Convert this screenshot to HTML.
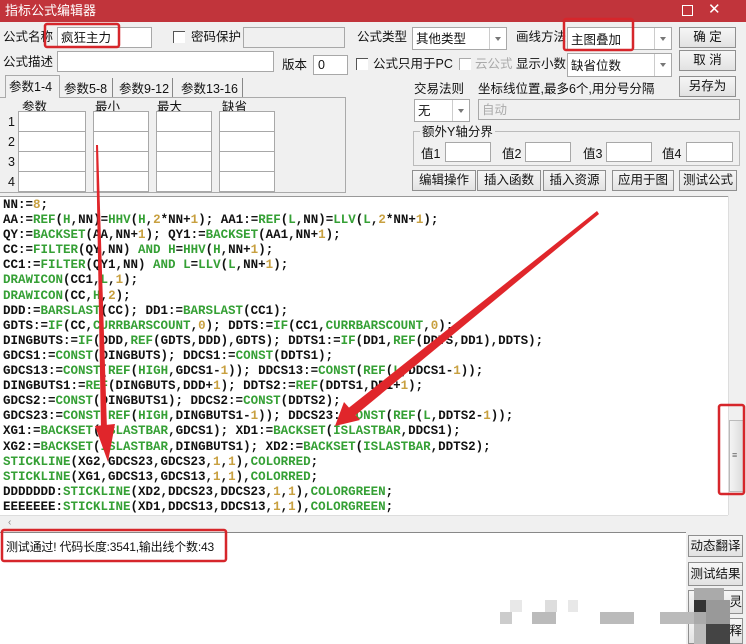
<!DOCTYPE html>
<html><head><meta charset="utf-8">
<style>
*{box-sizing:border-box;margin:0;padding:0}
body{width:746px;height:644px;overflow:hidden;background:#f0f0f0;font-family:"Liberation Sans","Noto Sans CJK SC",sans-serif;font-size:12.5px;color:#111;position:relative}
.a{position:absolute}
.t{position:absolute;white-space:nowrap;line-height:16px}
.in{position:absolute;background:#fff;border:1px solid #a8a8a8}
.dis{background:#f0f0f0}
.btn{position:absolute;background:linear-gradient(#f6f6f6,#e2e2e2);border:1px solid #8f8f8f;text-align:center;font-size:12.5px;line-height:18px;white-space:nowrap}
.cb{position:absolute;width:12px;height:12px;border-left:1px solid #555;border-top:1px solid #555;background:#fff}
.sel{position:absolute;background:#fff;border:1px solid #a8a8a8}
.sel .arr{position:absolute;right:0;top:0;bottom:0;width:17px;border-left:1px solid #ccc;background:#fff}
.sel .arr:after{content:"";position:absolute;left:5px;top:9px;border:3px solid transparent;border-top:4px solid #777}
#code{position:absolute;left:0;top:196px;width:728px;height:319px;background:#fff;border-top:1px solid #999;font-family:"Liberation Mono",monospace;font-weight:bold;font-size:12.5px;line-height:15.1px;padding:1px 0 0 3px;white-space:pre;color:#111}
.g{color:#35a035}.n{color:#c8a040}
</style></head><body>
<div class="a" style="left:0;top:0;width:746px;height:22px;background:#c1343b"></div>
<div class="t" style="left:5px;top:3px;color:#fff;font-size:13px">指标公式编辑器</div>
<div class="a" style="left:682px;top:5px;width:11px;height:11px;border:1px solid #fff"></div>
<div class="t" style="left:708px;top:2px;color:#fff;font-size:15px">✕</div>

<div class="t" style="left:3px;top:29px">公式名称</div>
<div class="in" style="left:57px;top:27px;width:95px;height:21px"></div>
<div class="t" style="left:61px;top:30px">疯狂主力</div>
<div class="cb" style="left:173px;top:31px"></div>
<div class="t" style="left:191px;top:29px">密码保护</div>
<div class="in dis" style="left:243px;top:27px;width:102px;height:21px"></div>
<div class="t" style="left:357px;top:29px">公式类型</div>
<div class="sel" style="left:412px;top:27px;width:95px;height:23px"><div class="arr"></div></div>
<div class="t" style="left:416px;top:31px">其他类型</div>
<div class="t" style="left:516px;top:29px">画线方法</div>
<div class="sel" style="left:567px;top:27px;width:105px;height:23px"><div class="arr"></div></div>
<div class="t" style="left:571px;top:32px">主图叠加</div>
<div class="btn" style="left:679px;top:27px;width:57px;height:21px">确&nbsp;定</div>

<div class="t" style="left:3px;top:54px">公式描述</div>
<div class="in" style="left:57px;top:51px;width:217px;height:21px"></div>
<div class="t" style="left:282px;top:57px">版本</div>
<div class="in" style="left:313px;top:55px;width:35px;height:20px"></div>
<div class="t" style="left:318px;top:57px">0</div>
<div class="cb" style="left:356px;top:58px"></div>
<div class="t" style="left:373px;top:56px">公式只用于PC</div>
<div class="cb" style="left:459px;top:58px;border-color:#aaa"></div>
<div class="t" style="left:475px;top:56px;color:#aaa">云公式</div>
<div class="t" style="left:516px;top:56px">显示小数</div>
<div class="sel" style="left:567px;top:53px;width:105px;height:24px"><div class="arr"></div></div>
<div class="t" style="left:571px;top:58px">缺省位数</div>
<div class="btn" style="left:679px;top:50px;width:57px;height:21px">取&nbsp;消</div>
<div class="btn" style="left:679px;top:76px;width:57px;height:21px">另存为</div>

<div class="a" style="left:0;top:97px;width:346px;height:96px;border:1px solid #aaa;border-left:none;background:#f0f0f0"></div>
<div class="a" style="left:5px;top:75px;width:55px;height:23px;background:#f0f0f0;border:1px solid #aaa;border-bottom:none"></div>
<div class="t" style="left:9px;top:79px">参数1-4</div>
<div class="a" style="left:60px;top:78px;width:53px;height:19px;border-right:1px solid #888"></div>
<div class="t" style="left:64px;top:81px">参数5-8</div>
<div class="a" style="left:113px;top:78px;width:60px;height:19px;border-right:1px solid #888"></div>
<div class="t" style="left:119px;top:81px">参数9-12</div>
<div class="a" style="left:173px;top:78px;width:70px;height:19px;border-right:1px solid #888"></div>
<div class="t" style="left:181px;top:81px">参数13-16</div>
<div class="t" style="left:22px;top:99px">参数</div>
<div class="t" style="left:95px;top:99px">最小</div>
<div class="t" style="left:157px;top:99px">最大</div>
<div class="t" style="left:222px;top:99px">缺省</div>
<div class="t" style="left:8px;top:114px">1</div><div class="t" style="left:8px;top:134px">2</div><div class="t" style="left:8px;top:154px">3</div><div class="t" style="left:8px;top:174px">4</div>
<div class="in" style="left:18px;top:111px;width:68px;height:81px;background:repeating-linear-gradient(#fff 0 19px,#a8a8a8 19px 20px)"></div>
<div class="in" style="left:93px;top:111px;width:56px;height:81px;background:repeating-linear-gradient(#fff 0 19px,#a8a8a8 19px 20px)"></div>
<div class="in" style="left:156px;top:111px;width:56px;height:81px;background:repeating-linear-gradient(#fff 0 19px,#a8a8a8 19px 20px)"></div>
<div class="in" style="left:219px;top:111px;width:56px;height:81px;background:repeating-linear-gradient(#fff 0 19px,#a8a8a8 19px 20px)"></div>

<div class="t" style="left:414px;top:81px">交易法则</div>
<div class="t" style="left:478px;top:81px">坐标线位置,最多6个,用分号分隔</div>
<div class="sel" style="left:414px;top:99px;width:56px;height:23px"><div class="arr"></div></div>
<div class="t" style="left:418px;top:103px">无</div>
<div class="in dis" style="left:478px;top:99px;width:262px;height:21px"></div>
<div class="t" style="left:482px;top:102px;color:#aaa">自动</div>
<div class="a" style="left:413px;top:131px;width:327px;height:35px;border:1px solid #bbb"></div>
<div class="t" style="left:420px;top:124px;background:#f0f0f0;padding:0 2px">额外Y轴分界</div>
<div class="t" style="left:421px;top:146px">值1</div><div class="in" style="left:445px;top:142px;width:46px;height:20px"></div>
<div class="t" style="left:502px;top:146px">值2</div><div class="in" style="left:525px;top:142px;width:46px;height:20px"></div>
<div class="t" style="left:583px;top:146px">值3</div><div class="in" style="left:606px;top:142px;width:46px;height:20px"></div>
<div class="t" style="left:662px;top:146px">值4</div><div class="in" style="left:686px;top:142px;width:47px;height:20px"></div>
<div class="btn" style="left:412px;top:170px;width:64px;height:21px">编辑操作</div>
<div class="btn" style="left:477px;top:170px;width:64px;height:21px">插入函数</div>
<div class="btn" style="left:543px;top:170px;width:63px;height:21px">插入资源</div>
<div class="btn" style="left:612px;top:170px;width:62px;height:21px">应用于图</div>
<div class="btn" style="left:679px;top:170px;width:58px;height:21px">测试公式</div>

<div id="code">NN:=<span class="n">8</span>;
AA:=<span class="g">REF</span>(<span class="g">H</span>,NN)=<span class="g">HHV</span>(<span class="g">H</span>,<span class="n">2</span>*NN+<span class="n">1</span>); AA1:=<span class="g">REF</span>(<span class="g">L</span>,NN)=<span class="g">LLV</span>(<span class="g">L</span>,<span class="n">2</span>*NN+<span class="n">1</span>);
QY:=<span class="g">BACKSET</span>(AA,NN+<span class="n">1</span>); QY1:=<span class="g">BACKSET</span>(AA1,NN+<span class="n">1</span>);
CC:=<span class="g">FILTER</span>(QY,NN) <span class="g">AND</span> <span class="g">H</span>=<span class="g">HHV</span>(<span class="g">H</span>,NN+<span class="n">1</span>);
CC1:=<span class="g">FILTER</span>(QY1,NN) <span class="g">AND</span> <span class="g">L</span>=<span class="g">LLV</span>(<span class="g">L</span>,NN+<span class="n">1</span>);
<span class="g">DRAWICON</span>(CC1,<span class="g">L</span>,<span class="n">1</span>);
<span class="g">DRAWICON</span>(CC,<span class="g">H</span>,<span class="n">2</span>);
DDD:=<span class="g">BARSLAST</span>(CC); DD1:=<span class="g">BARSLAST</span>(CC1);
GDTS:=<span class="g">IF</span>(CC,<span class="g">CURRBARSCOUNT</span>,<span class="n">0</span>); DDTS:=<span class="g">IF</span>(CC1,<span class="g">CURRBARSCOUNT</span>,<span class="n">0</span>);
DINGBUTS:=<span class="g">IF</span>(DDD,<span class="g">REF</span>(GDTS,DDD),GDTS); DDTS1:=<span class="g">IF</span>(DD1,<span class="g">REF</span>(DDTS,DD1),DDTS);
GDCS1:=<span class="g">CONST</span>(DINGBUTS); DDCS1:=<span class="g">CONST</span>(DDTS1);
GDCS13:=<span class="g">CONST</span>(<span class="g">REF</span>(<span class="g">HIGH</span>,GDCS1-<span class="n">1</span>)); DDCS13:=<span class="g">CONST</span>(<span class="g">REF</span>(<span class="g">L</span>,DDCS1-<span class="n">1</span>));
DINGBUTS1:=<span class="g">REF</span>(DINGBUTS,DDD+<span class="n">1</span>); DDTS2:=<span class="g">REF</span>(DDTS1,DD1+<span class="n">1</span>);
GDCS2:=<span class="g">CONST</span>(DINGBUTS1); DDCS2:=<span class="g">CONST</span>(DDTS2);
GDCS23:=<span class="g">CONST</span>(<span class="g">REF</span>(<span class="g">HIGH</span>,DINGBUTS1-<span class="n">1</span>)); DDCS23:=<span class="g">CONST</span>(<span class="g">REF</span>(<span class="g">L</span>,DDTS2-<span class="n">1</span>));
XG1:=<span class="g">BACKSET</span>(<span class="g">ISLASTBAR</span>,GDCS1); XD1:=<span class="g">BACKSET</span>(<span class="g">ISLASTBAR</span>,DDCS1);
XG2:=<span class="g">BACKSET</span>(<span class="g">ISLASTBAR</span>,DINGBUTS1); XD2:=<span class="g">BACKSET</span>(<span class="g">ISLASTBAR</span>,DDTS2);
<span class="g">STICKLINE</span>(XG2,GDCS23,GDCS23,<span class="n">1</span>,<span class="n">1</span>),<span class="g">COLORRED</span>;
<span class="g">STICKLINE</span>(XG1,GDCS13,GDCS13,<span class="n">1</span>,<span class="n">1</span>),<span class="g">COLORRED</span>;
DDDDDDD:<span class="g">STICKLINE</span>(XD2,DDCS23,DDCS23,<span class="n">1</span>,<span class="n">1</span>),<span class="g">COLORGREEN</span>;
EEEEEEE:<span class="g">STICKLINE</span>(XD1,DDCS13,DDCS13,<span class="n">1</span>,<span class="n">1</span>),<span class="g">COLORGREEN</span>;</div>
<div class="a" style="left:728px;top:196px;width:18px;height:319px;background:#f0f0f0;border-left:1px solid #ddd"></div>
<div class="a" style="left:729px;top:420px;width:15px;height:72px;background:linear-gradient(90deg,#f4f4f4,#dcdcdc);border:1px solid #bbb"></div>
<div class="t" style="left:732px;top:447px;font-size:9px;color:#666">≡</div>
<div class="a" style="left:0;top:515px;width:728px;height:16px;background:#f0f0f0;border-top:1px solid #ddd"></div>
<div class="t" style="left:8px;top:515px;font-size:10px;color:#888">‹</div>
<div class="a" style="left:0;top:532px;width:686px;height:112px;background:#fff;border-top:1px solid #888"></div>
<div class="t" style="left:6px;top:539px;font-size:12px;letter-spacing:-0.2px">测试通过! 代码长度:3541,输出线个数:43</div>
<div class="btn" style="left:688px;top:535px;width:55px;height:22px;line-height:20px">动态翻译</div>
<div class="btn" style="left:688px;top:562px;width:55px;height:24px;line-height:22px">测试结果</div>
<div class="btn" style="left:688px;top:590px;width:55px;height:24px;line-height:22px;text-align:right">灵</div>
<div class="btn" style="left:688px;top:618px;width:55px;height:26px;line-height:24px;text-align:right">释</div>
<div class="a" style="left:510px;top:600px;width:12px;height:12px;background:#e8e8e8"></div>
<div class="a" style="left:500px;top:612px;width:12px;height:12px;background:#ccc"></div>
<div class="a" style="left:532px;top:612px;width:24px;height:12px;background:#bbb"></div>
<div class="a" style="left:545px;top:600px;width:12px;height:12px;background:#ddd"></div>
<div class="a" style="left:568px;top:600px;width:10px;height:12px;background:#e8e8e8"></div>
<div class="a" style="left:600px;top:612px;width:34px;height:12px;background:#bbb"></div>
<div class="a" style="left:660px;top:612px;width:34px;height:12px;background:#bbb"></div>
<div class="a" style="left:694px;top:588px;width:30px;height:12px;background:#aaa"></div>
<div class="a" style="left:694px;top:600px;width:12px;height:12px;background:#333"></div>
<div class="a" style="left:706px;top:600px;width:24px;height:24px;background:#999"></div>
<div class="a" style="left:694px;top:612px;width:12px;height:12px;background:#aaa"></div>
<div class="a" style="left:706px;top:624px;width:24px;height:20px;background:#444"></div>
<div class="a" style="left:694px;top:624px;width:12px;height:20px;background:#bbb"></div>

<svg class="a" style="left:0;top:0" width="746" height="644">
<g fill="none" stroke="#d6262b" stroke-width="2.5">
<rect x="45" y="24" width="74" height="23" rx="2"/>
<rect x="564" y="19" width="69" height="31" rx="2"/>
<rect x="719" y="405" width="25" height="89" rx="2"/>
<rect x="2" y="530" width="224" height="31" rx="2"/>
</g>
<polygon fill="#e0262b" points="96,145 98,145 107,430 101,430"/>
<polygon fill="#e0262b" points="95,426 115,424 108,462"/>
<polygon fill="#e0262b" points="597,211 599,214 352,418 346,410"/>
<polygon fill="#e0262b" points="335,426 344,402 360,420"/>
</svg>
</body></html>
